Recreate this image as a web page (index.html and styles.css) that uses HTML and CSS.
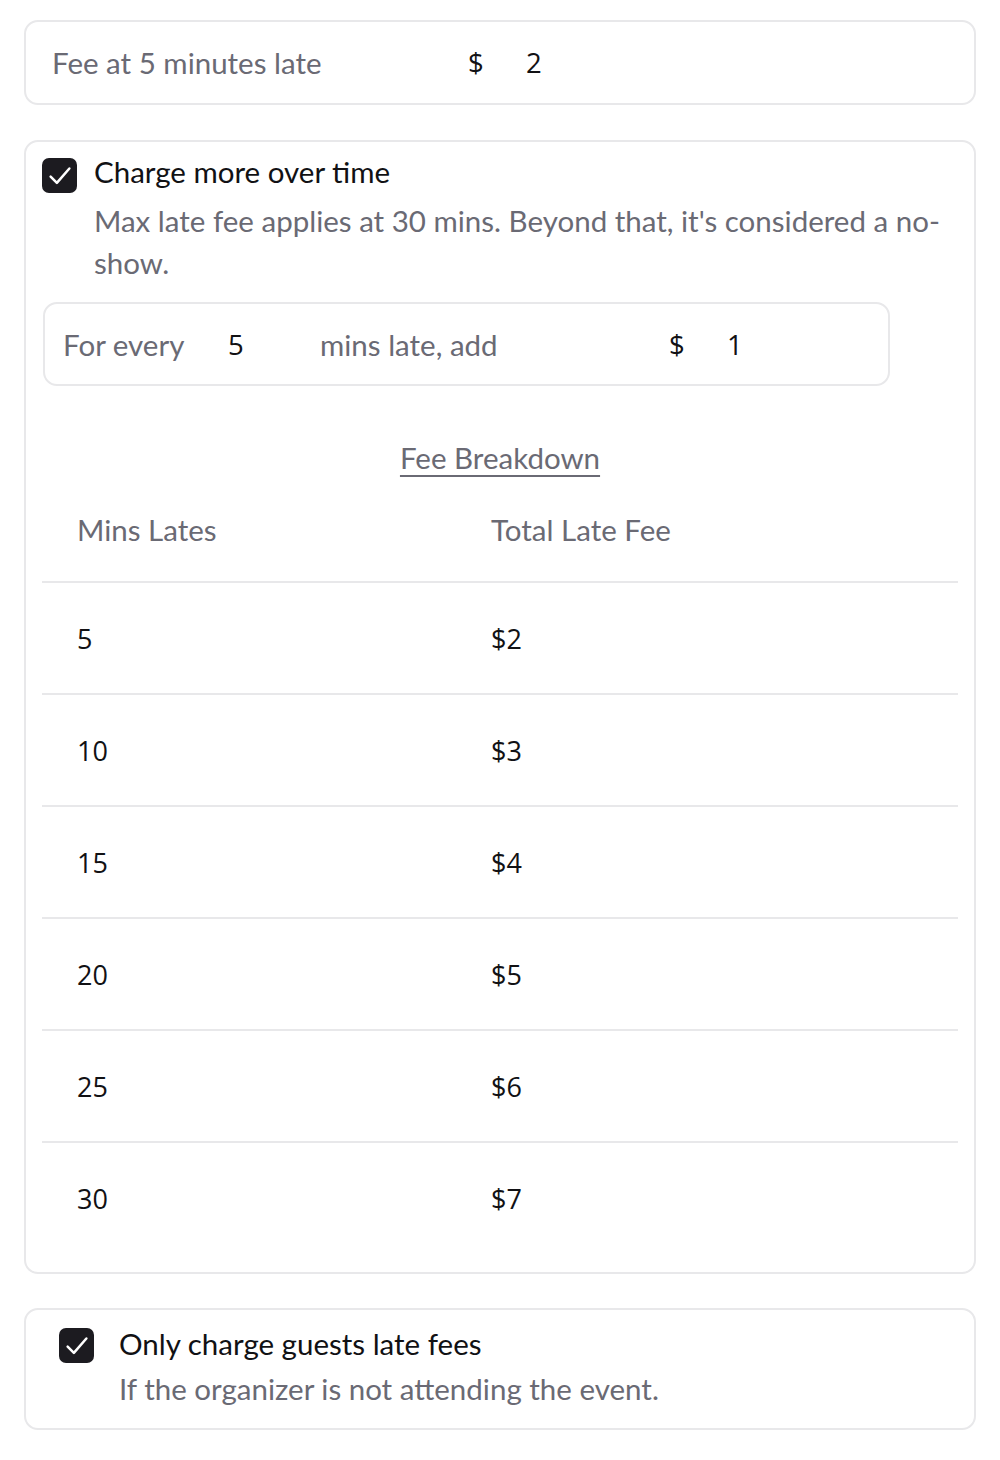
FILE: index.html
```html
<!DOCTYPE html>
<html>
<head>
<meta charset="utf-8">
<link rel="stylesheet" href="styles.css">
</head>
<body>
<div class="page">
  <div class="card fee-card">
    <span class="field-label w-label">Fee at 5 minutes late</span>
    <span class="num currency">$</span>
    <span class="num">2</span>
  </div>

  <div class="card over-card">
    <div class="check-row">
      <span class="checkbox"><svg viewBox="0 0 24 24" width="30" height="30"><path d="M4.5 12.5l5 5L19.5 6" fill="none" stroke="#fff" stroke-width="2" stroke-linecap="round" stroke-linejoin="round"/></svg></span>
      <div class="check-text">
        <div class="check-label">Charge more over time</div>
        <div class="check-desc">Max late fee applies at 30 mins. Beyond that, it's considered a no-show.</div>
      </div>
    </div>

    <div class="every-row">
      <span class="field-label every-label">For every</span>
      <span class="num every-val">5</span>
      <span class="field-label every-mid">mins late, add</span>
      <span class="num currency">$</span>
      <span class="num">1</span>
    </div>

    <div class="breakdown-title"><span>Fee Breakdown</span></div>

    <table class="fee-table">
      <thead>
        <tr><th class="col1">Mins Lates</th><th>Total Late Fee</th></tr>
      </thead>
      <tbody>
        <tr><td>5</td><td>$2</td></tr>
        <tr><td>10</td><td>$3</td></tr>
        <tr><td>15</td><td>$4</td></tr>
        <tr><td>20</td><td>$5</td></tr>
        <tr><td>25</td><td>$6</td></tr>
        <tr><td>30</td><td>$7</td></tr>
      </tbody>
    </table>
  </div>

  <div class="card guest-card">
    <div class="check-row">
      <span class="checkbox"><svg viewBox="0 0 24 24" width="30" height="30"><path d="M4.5 12.5l5 5L19.5 6" fill="none" stroke="#fff" stroke-width="2" stroke-linecap="round" stroke-linejoin="round"/></svg></span>
      <div class="check-text">
        <div class="check-label">Only charge guests late fees</div>
        <div class="check-desc guest-desc">If the organizer is not attending the event.</div>
      </div>
    </div>
  </div>
</div>
</body>
</html>
```

FILE: styles.css
```css
html, body {
  margin: 0;
  padding: 0;
  background: #fff;
}
body {
  font-family: Lato, "Noto Sans", sans-serif;
  color: #111114;
}
.page {
  padding: 20px 24px 0 24px;
}
.card {
  border: 2px solid #e8e8ea;
  border-radius: 14px;
  background: #fff;
  box-sizing: border-box;
}
.field-label {
  font-size: 29.5px;
  color: #6a6a74;
}
.num {
  font-family: "Open Sans", "Noto Sans", sans-serif;
  font-size: 27.5px;
  color: #111114;
}
.fee-card {
  height: 85px;
  display: flex;
  align-items: center;
  padding: 0 26px;
}
.w-label {
  width: 416px;
}
.currency {
  width: 58px;
}
.over-card {
  margin-top: 35px;
  padding: 15px 16px 19px 16px;
}
.check-row {
  display: flex;
  align-items: flex-start;
}
.checkbox {
  width: 35px;
  height: 35px;
  border-radius: 7px;
  background: #1c1b20;
  display: flex;
  align-items: center;
  justify-content: center;
  flex: none;
  margin-top: 1px;
}
.check-text {
  margin-left: 17px;
  flex: 1;
}
.check-label {
  font-size: 29.5px;
  line-height: 36px;
  margin-top: -3px;
  color: #111114;
}
.check-desc {
  font-size: 29.5px;
  line-height: 42px;
  margin-top: 10px;
  color: #6a6a74;
}
.every-row {
  margin-top: 18px;
  width: 847px;
  height: 84px;
  box-sizing: border-box;
  border: 2px solid #e8e8ea;
  border-radius: 14px;
  display: flex;
  align-items: center;
  padding: 0 18px;
  margin-left: 1px;
}
.every-label {
  width: 165px;
}
.every-val {
  width: 92px;
}
.every-mid {
  width: 349px;
}
.breakdown-title {
  margin-top: 52px;
  text-align: center;
  font-size: 29.5px;
  line-height: 40px;
  color: #6a6a74;
}
.breakdown-title span {
  text-decoration: underline;
  text-underline-offset: 6px;
  text-decoration-thickness: 2px;
}
.fee-table {
  width: 100%;
  border-collapse: collapse;
}
.fee-table th {
  font-weight: normal;
  font-size: 29.5px;
  color: #6a6a74;
  text-align: left;
  height: 103px;
  padding: 0 0 0 35px;
  border-bottom: 2px solid #e8e8ea;
}
.fee-table th.col1 {
  width: 379px;
}
.fee-table td {
  font-family: "Open Sans", "Noto Sans", sans-serif;
  font-size: 27px;
  color: #111114;
  height: 110px;
  padding: 0 0 0 35px;
  border-bottom: 2px solid #e8e8ea;
}
.fee-table tbody tr:last-child td {
  border-bottom: none;
}
.guest-card {
  margin-top: 34px;
  padding: 17px 16px 18px 33px;
}
.guest-card .check-text {
  margin-left: 25px;
}
.guest-card .check-label {
  margin-top: -1px;
}
.guest-desc {
  margin-top: 6px;
}
```
